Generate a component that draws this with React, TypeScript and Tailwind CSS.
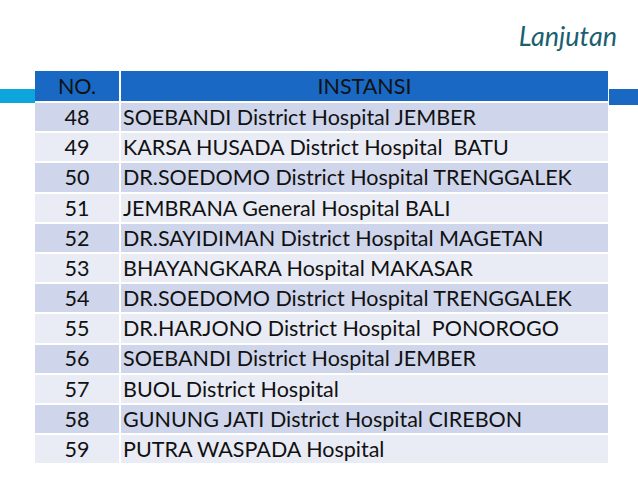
import React from 'react';

const rows: [string, string][] = [
  ['48', 'SOEBANDI District Hospital JEMBER'],
  ['49', 'KARSA HUSADA District Hospital  BATU'],
  ['50', 'DR.SOEDOMO District Hospital TRENGGALEK'],
  ['51', 'JEMBRANA General Hospital BALI'],
  ['52', 'DR.SAYIDIMAN District Hospital MAGETAN'],
  ['53', 'BHAYANGKARA Hospital MAKASAR'],
  ['54', 'DR.SOEDOMO District Hospital TRENGGALEK'],
  ['55', 'DR.HARJONO District Hospital  PONOROGO'],
  ['56', 'SOEBANDI District Hospital JEMBER'],
  ['57', 'BUOL District Hospital'],
  ['58', 'GUNUNG JATI District Hospital CIREBON'],
  ['59', 'PUTRA WASPADA Hospital'],
];

export default function App() {
  return (
    <div className="w-[638px] h-[479px] bg-white overflow-hidden" style={{ fontFamily: 'Lato, "Open Sans", sans-serif' }}>
      <div className="h-[71px] flex justify-end items-start pr-[21px] pt-[20px]">
        <span className="italic text-[27px] leading-[32px] text-[#1b5f71]">Lanjutan</span>
      </div>
      <div className="flex">
        <div className="w-[35px] pt-[18px]">
          <div className="h-[14px] bg-[#0ea5dc]" />
        </div>
        <div className="w-[573px] text-[21.5px] text-[#111]">
          <div className="flex h-[30px] bg-[#1868c4]">
            <div className="w-[86px] border-r-2 border-white flex items-center justify-center">NO.</div>
            <div className="flex-1 flex items-center justify-center">INSTANSI</div>
          </div>
          {rows.map(([no, name], i) => (
            <div
              key={no}
              className={`flex h-[30.2px] border-t-2 border-white ${i % 2 === 0 ? 'bg-[#cfd5ea]' : 'bg-[#e9ebf5]'}`}
            >
              <div className="w-[86px] border-r-2 border-white flex items-center justify-center">{no}</div>
              <div className="flex-1 flex items-center pl-[2px] whitespace-pre">{name}</div>
            </div>
          ))}
        </div>
        <div className="flex-1 pt-[18px]">
          <div className="h-[16px] bg-[#1868c4] ml-[1px]" />
        </div>
      </div>
    </div>
  );
}
